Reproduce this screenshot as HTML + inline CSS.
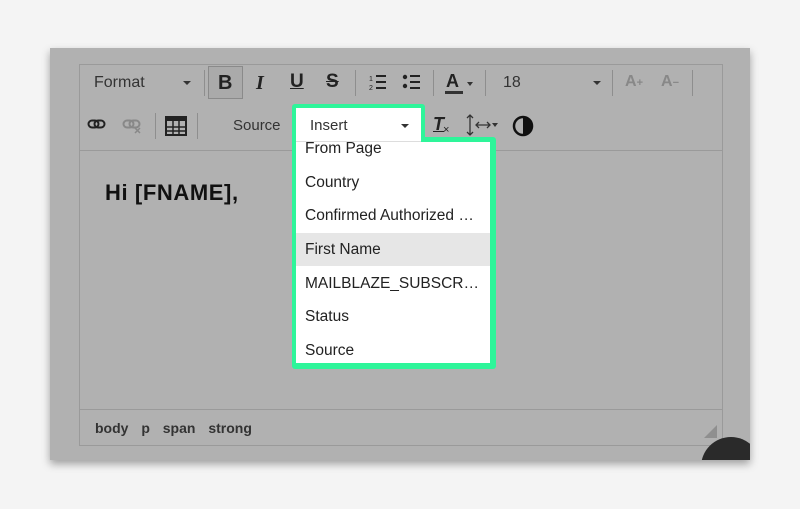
<!DOCTYPE html>
<html><head><meta charset="utf-8"><style>
*{margin:0;padding:0;box-sizing:border-box}
body{width:800px;height:509px;background:#f4f4f4;font-family:"Liberation Sans",Arial,sans-serif;position:relative;overflow:hidden}
.a{position:absolute}
.panel{left:50px;top:48px;width:700px;height:412px;background:#b1b1b1;box-shadow:0 4px 8px rgba(0,0,0,.35)}
.ed{left:79px;top:64px;width:644px;height:382px;border:1px solid #9a9a9a}
.sep{width:1px;background:#8e8e8e}
.t{color:#333;font-size:16px}
.g{color:#888}
</style></head><body>
<div class="a panel"></div>
<div class="a ed"></div>
<div class="a" style="left:79px;top:150px;width:644px;height:1px;background:#9a9a9a"></div>
<div class="a" style="left:79px;top:409px;width:644px;height:1px;background:#9a9a9a"></div>
<!-- row1 -->
<div class="a t" style="left:94px;top:74px">Format</div>
<div class="a" style="left:183px;top:81px;border:4px solid transparent;border-top:4px solid #333"></div>
<div class="a sep" style="left:204px;top:70px;height:26px"></div>
<div class="a" style="left:208px;top:66px;width:35px;height:33px;border:1px solid #8a8a8a;background:#aaa"></div>
<div class="a" style="left:218px;top:72px;font-weight:bold;font-size:20px;color:#222">B</div>
<div class="a" style="left:256px;top:72px;font-style:italic;font-weight:bold;font-size:20px;color:#222;font-family:'Liberation Serif',serif">I</div>
<div class="a" style="left:290px;top:71px;font-weight:bold;font-size:19px;color:#222;text-decoration:underline">U</div>
<div class="a" style="left:326px;top:71px;font-weight:bold;font-size:19px;color:#222;text-decoration:line-through">S</div>
<div class="a sep" style="left:355px;top:70px;height:26px"></div>
<svg class="a" style="left:368px;top:73px" width="60" height="18"><g stroke="#222" stroke-width="2"><line x1="8" y1="3" x2="18" y2="3"/><line x1="8" y1="9" x2="18" y2="9"/><line x1="8" y1="15" x2="18" y2="15"/><line x1="42" y1="3" x2="52" y2="3"/><line x1="42" y1="9" x2="52" y2="9"/><line x1="42" y1="15" x2="52" y2="15"/></g><text x="1" y="8" font-size="7" fill="#222">1</text><text x="1" y="17" font-size="7" fill="#222">2</text><circle cx="37" cy="4" r="2.2" fill="#222"/><circle cx="37" cy="13" r="2.2" fill="#222"/></svg>
<div class="a sep" style="left:433px;top:70px;height:26px"></div>
<div class="a" style="left:446px;top:71px;font-weight:bold;font-size:18px;color:#222">A</div>
<div class="a" style="left:445px;top:91px;width:18px;height:3px;background:#333"></div>
<div class="a" style="left:467px;top:82px;border:3px solid transparent;border-top:4px solid #333"></div>
<div class="a sep" style="left:485px;top:70px;height:26px"></div>
<div class="a t" style="left:503px;top:74px">18</div>
<div class="a" style="left:593px;top:81px;border:4px solid transparent;border-top:4px solid #333"></div>
<div class="a sep" style="left:612px;top:70px;height:26px"></div>
<div class="a g" style="left:625px;top:73px;font-weight:bold;font-size:16px">A<span style="font-size:11px">+</span></div>
<div class="a g" style="left:661px;top:73px;font-weight:bold;font-size:16px">A<span style="font-size:11px">−</span></div>
<div class="a sep" style="left:692px;top:70px;height:26px"></div>
<!-- row2 -->
<svg class="a" style="left:87px;top:117px" width="60" height="18"><rect x="1.5" y="3.5" width="10" height="7" rx="3.5" fill="none" stroke="#222" stroke-width="2"/><rect x="7.5" y="3.5" width="10" height="7" rx="3.5" fill="none" stroke="#222" stroke-width="2"/><rect x="36.5" y="3.5" width="10" height="7" rx="3.5" fill="none" stroke="#888" stroke-width="2"/><rect x="42.5" y="3.5" width="10" height="7" rx="3.5" fill="none" stroke="#888" stroke-width="2"/><path d="M48 11l5 5M53 11l-5 5" stroke="#888" stroke-width="1.5"/></svg>
<div class="a sep" style="left:155px;top:113px;height:26px"></div>
<svg class="a" style="left:165px;top:116px" width="22" height="20"><rect x="1" y="1" width="20" height="18" fill="none" stroke="#222" stroke-width="2"/><rect x="1" y="1" width="20" height="4" fill="#222"/><path d="M1 11h20M1 15h20M8 5v14M14 5v14" stroke="#222" stroke-width="1.5"/></svg>
<div class="a sep" style="left:197px;top:113px;height:26px"></div>
<div class="a t" style="left:233px;top:117px;font-size:15px">Source</div>
<div class="a" style="left:433px;top:114px;font-weight:bold;font-style:italic;font-size:18px;color:#222;text-decoration:underline">T</div>
<div class="a" style="left:443px;top:124px;font-size:11px;color:#222">×</div>
<svg class="a" style="left:464px;top:112px" width="36" height="26"><path d="M6 3v20M3 6l3-3 3 3M3 20l3 3 3-3M12 13h14M15 10l-3 3 3 3M23 10l3 3-3 3" stroke="#333" stroke-width="1.3" fill="none"/><path d="M28 11h6l-3 4z" fill="#333"/></svg>
<svg class="a" style="left:512px;top:115px" width="22" height="22"><circle cx="11" cy="11" r="9" fill="none" stroke="#111" stroke-width="2.5"/><path d="M11 2a9 9 0 0 1 0 18z" fill="#111"/></svg>
<!-- heading -->
<div class="a" style="left:105px;top:180px;font-weight:bold;font-size:22px;letter-spacing:0.6px;color:#111">Hi [FNAME],</div>
<!-- footer -->
<div class="a" style="left:95px;top:420px;font-size:14px;font-weight:bold;color:#333;word-spacing:9px">body p span strong</div>
<div class="a" style="left:704px;top:425px;border-left:13px solid transparent;border-bottom:13px solid #8f8f8f"></div>
<div class="a" style="left:700px;top:437px;width:50px;height:23px;overflow:hidden"><div style="width:60px;height:60px;border-radius:50%;background:#2a2a2a;margin-left:1px"></div></div>
<!-- dropdown -->
<div class="a" style="left:292px;top:104px;width:133px;height:40px;background:#2ef59a;border-radius:3px"></div>
<div class="a" style="left:292px;top:137px;width:204px;height:232px;background:#2ef59a;border-radius:3px"></div>
<div class="a" style="left:296px;top:108px;width:125px;height:34px;background:#fff;border-bottom:1px solid #ddd"></div>
<div class="a" style="left:310px;top:117px;font-size:15px;color:#333">Insert</div>
<div class="a" style="left:401px;top:124px;border:4px solid transparent;border-top:4px solid #333"></div>
<div class="a" style="left:296px;top:142px;width:194px;height:221px;background:#fff;overflow:hidden;font-size:15.5px;color:#222">
<div style="position:absolute;left:9px;top:-2px">From Page</div>
<div style="position:absolute;left:9px;top:32px">Country</div>
<div style="position:absolute;left:9px;top:65px;white-space:nowrap">Confirmed Authorized …</div>
<div style="position:absolute;left:0;top:91px;width:194px;height:33px;background:#e6e6e6"></div>
<div style="position:absolute;left:9px;top:99px">First Name</div>
<div style="position:absolute;left:9px;top:133px;white-space:nowrap">MAILBLAZE_SUBSCR…</div>
<div style="position:absolute;left:9px;top:166px">Status</div>
<div style="position:absolute;left:9px;top:200px">Source</div>
</div>
</body></html>
